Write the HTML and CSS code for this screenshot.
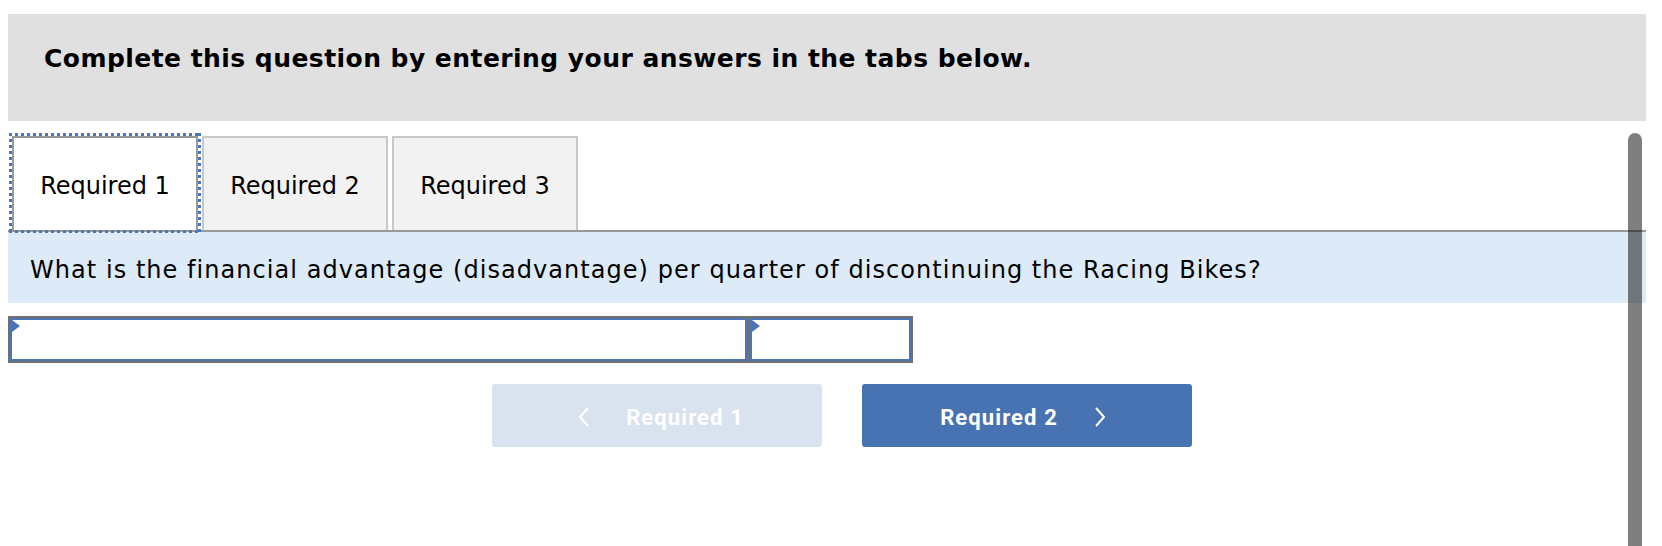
FILE: index.html
```html
<!DOCTYPE html>
<html lang="en">
<head>
<meta charset="utf-8">
<title>Required</title>
<link rel="stylesheet" href="styles.css">
</head>
<body>
<div class="page">
  <div class="instructions">Complete this question by entering your answers in the tabs below.</div>
  <div class="tabs">
    <button class="tab tab-active">Required 1</button>
    <button class="tab">Required 2</button>
    <button class="tab">Required 3</button>
  </div>
  <div class="question">What is the financial advantage (disadvantage) per quarter of discontinuing the Racing Bikes?</div>
  <div class="answer-row">
    <div class="cell cell-wide"><span class="flag"></span></div>
    <div class="cell cell-narrow"><span class="flag"></span></div>
  </div>
  <div class="nav">
    <button class="nav-btn nav-prev">
      <svg class="chev" width="14" height="20" viewBox="0 0 14 20"><polyline points="11,1 3,10 11,19" fill="none" stroke="#fff" stroke-width="2"/></svg>
      <span>Required 1</span>
    </button>
    <button class="nav-btn nav-next">
      <span>Required 2</span>
      <svg class="chev" width="14" height="20" viewBox="0 0 14 20"><polyline points="3,1 11,10 3,19" fill="none" stroke="#fff" stroke-width="2"/></svg>
    </button>
  </div>
</div>
<div class="scrollbar"></div>
</body>
</html>
```
FILE: styles.css
```css
html, body {
  margin: 0;
  padding: 0;
  background: #ffffff;
}

.page {
  padding: 14px 0 0 8px;
  width: 1638px;
  font-family: "DejaVu Sans", Verdana, sans-serif;
  color: #000;
}

.instructions {
  background: #e0e0e0;
  height: 107px;
  box-sizing: border-box;
  padding: 30px 0 0 36px;
  font-size: 25px;
  line-height: 30px;
  font-weight: bold;
  letter-spacing: 0.45px;
}

.tabs {
  display: flex;
  gap: 4px;
  margin-top: 15px;
  padding-left: 4px;
  border-bottom: 2px solid #999999;
}

.tab {
  box-sizing: border-box;
  width: 186px;
  height: 94px;
  border: 2px solid #c8c8c8;
  border-bottom: none;
  background: #f2f2f2;
  font-family: "DejaVu Sans", Verdana, sans-serif;
  font-size: 24px;
  color: #000;
  padding: 4px 0 0 0;
  margin: 0;
}

.tab-active {
  background: #ffffff;
  border-color: #999999;
  position: relative;
  z-index: 1;
}

.tab-active::after {
  content: "";
  position: absolute;
  top: -5px;
  left: -5px;
  right: -5px;
  bottom: -3px;
  pointer-events: none;
  background:
    repeating-linear-gradient(90deg, #4a78c0 0 3px, transparent 3px 6px) top left / 100% 3px no-repeat,
    repeating-linear-gradient(90deg, #4a78c0 0 3px, transparent 3px 6px) bottom left / 100% 3px no-repeat,
    repeating-linear-gradient(180deg, #4a78c0 0 3px, transparent 3px 6px) top left / 3px 100% no-repeat,
    repeating-linear-gradient(180deg, #4a78c0 0 3px, transparent 3px 6px) top right / 3px 100% no-repeat;
}

.question {
  background: #ddeaf7;
  height: 71px;
  box-sizing: border-box;
  padding: 23px 0 0 22px;
  font-size: 24px;
  line-height: 30px;
  letter-spacing: 1.05px;
}

.answer-row {
  display: flex;
  gap: 3px;
  margin-top: 13px;
  width: 905px;
  height: 47px;
  box-sizing: border-box;
  border: 2px solid #707070;
  background: #707070;
}

.cell {
  position: relative;
  box-sizing: border-box;
  height: 43px;
  border: 2px solid #4a74b4;
  background: #ffffff;
}

.cell-wide { width: 737px; }
.cell-narrow { width: 161px; }

.flag {
  position: absolute;
  left: 0;
  top: 0;
  width: 0;
  height: 0;
  border-top: 6px solid transparent;
  border-bottom: 6px solid transparent;
  border-left: 8px solid #4a74b4;
}

.nav {
  display: flex;
  justify-content: center;
  gap: 40px;
  margin-top: 21px;
  padding-left: 30px;
}

.nav-btn {
  display: flex;
  align-items: center;
  justify-content: center;
  gap: 35px;
  width: 330px;
  height: 63px;
  box-sizing: border-box;
  border: none;
  border-radius: 3px;
  font-family: Roboto, "Liberation Sans", sans-serif;
  font-weight: 700;
  font-size: 22px;
  letter-spacing: 1.1px;
  color: #ffffff;
  margin: 0;
  padding: 3px 0 0 0;
}

.nav-prev { background: #d9e3ef; padding-left: 7px; }
.nav-next { background: #4873b2; padding-right: 7px; }

.chev { display: block; }

.scrollbar {
  position: fixed;
  top: 133px;
  left: 1628px;
  width: 14px;
  height: 460px;
  border-radius: 7px;
  background: rgba(0, 0, 0, 0.5);
}
```
